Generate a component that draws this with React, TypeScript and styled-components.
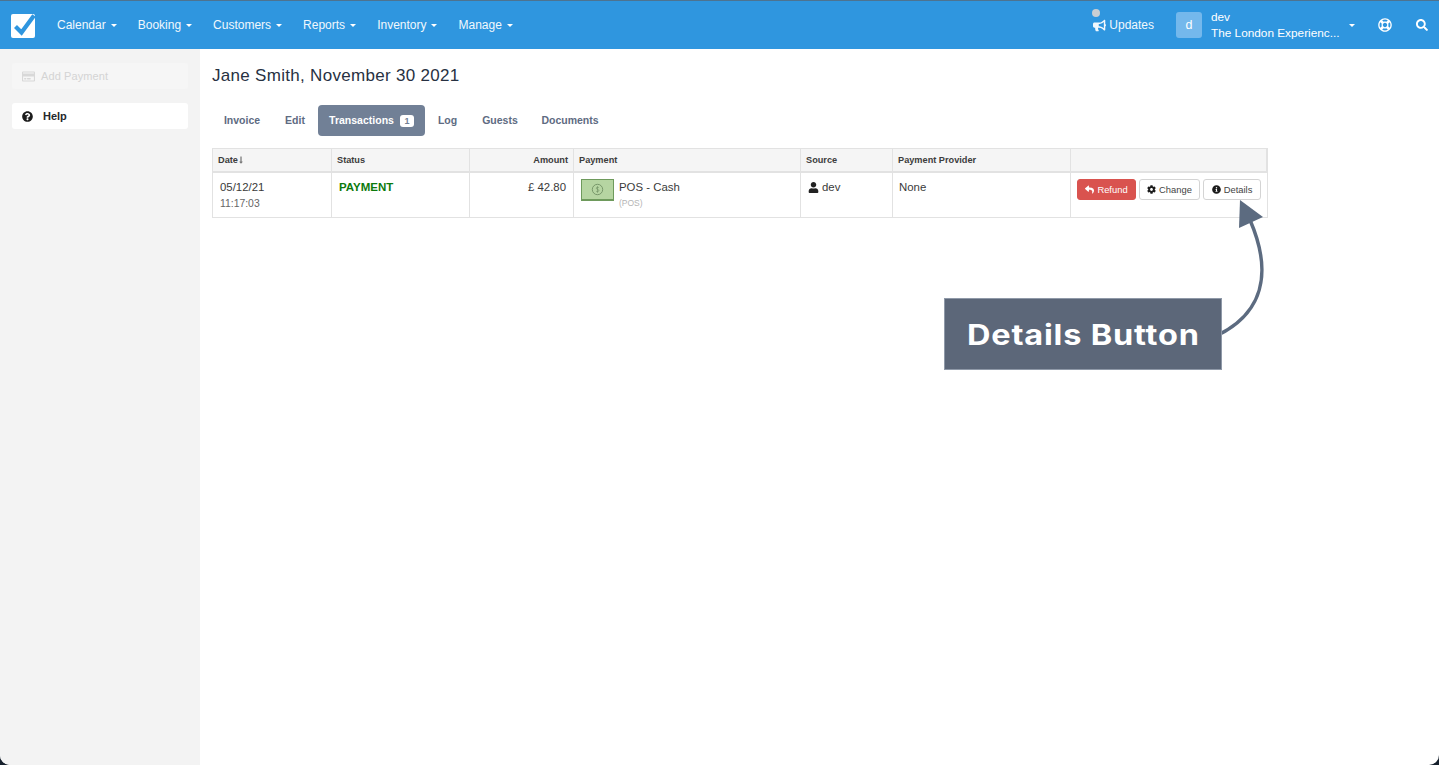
import React from 'react';
import styled, { createGlobalStyle } from 'styled-components';
import { FaBullhorn, FaRegLifeRing, FaSearch, FaRegCreditCard, FaQuestionCircle, FaUser, FaReply, FaCog, FaInfoCircle, FaLongArrowAltDown } from 'react-icons/fa';

const Global = createGlobalStyle`
  html, body { margin: 0; padding: 0; height: 100%; background: #16202c; }
  #root { height: 100%; }
  * { box-sizing: border-box; }
  body { font-family: "Liberation Sans", Arial, sans-serif; font-size: 11.5px; color: #333; overflow: hidden; }
`;

const Page = styled.div`
  position: relative;
  width: 1439px;
  height: 765px;
  display: flex;
  flex-direction: column;
  background: #fff;
  border-radius: 0 0 10px 10px;
  overflow: hidden;
`;

const Navbar = styled.header`
  height: 49px;
  flex: none;
  display: flex;
  align-items: center;
  background: #2f96df;
  border-top: 1px solid #4d7390;
  color: #fff;
  padding: 0 0 0 11px;
`;

const Logo = styled.div`
  width: 24px;
  height: 24px;
  border-radius: 2px;
  background: #fff;
  margin: 1px 22px 0 0;
  flex: none;
`;

const Menu = styled.nav`
  display: flex;
  gap: 21px;
`;

const MenuItem = styled.div`
  display: flex;
  align-items: center;
  font-size: 12px;
  color: #f1f8fd;
  gap: 5px;
`;

const Caret = styled.span`
  width: 0;
  height: 0;
  border-left: 3px solid transparent;
  border-right: 3px solid transparent;
  border-top: 3px solid #fff;
  margin-top: 1px;
`;

const NavRight = styled.div`
  margin-left: auto;
  display: flex;
  align-items: center;
  height: 100%;
`;

const Updates = styled.div`
  position: relative;
  display: flex;
  align-items: center;
  gap: 3px;
  font-size: 12px;
  margin-right: 22px;
  color: #f1f8fd;
`;

const Dot = styled.span`
  position: absolute;
  left: -1px;
  top: -9px;
  width: 8px;
  height: 8px;
  border-radius: 50%;
  background: #c9ced3;
`;

const Avatar = styled.div`
  width: 26px;
  height: 26px;
  border-radius: 3px;
  background: #74b8ec;
  display: flex;
  align-items: center;
  justify-content: center;
  font-size: 12.5px;
  margin-right: 9px;
`;

const UserBlock = styled.div`
  width: 138px;
  display: flex;
  flex-direction: column;
  gap: 3px;
  font-size: 11.8px;
  line-height: 13px;
  white-space: nowrap;
`;

const IconSlot = styled.span<{ $mr: number }>`
  display: flex;
  margin-right: ${p => p.$mr}px;
  font-size: 13px;
`;

const Body = styled.div`
  flex: 1;
  display: flex;
`;

const Sidebar = styled.aside`
  width: 200px;
  background: #f3f3f3;
  padding: 14px 12px;
  display: flex;
  flex-direction: column;
  gap: 14px;
`;

const SideButton = styled.div<{ $disabled?: boolean }>`
  height: 26px;
  border-radius: 3px;
  display: flex;
  align-items: center;
  padding-left: 10px;
  font-size: 11px;
  font-weight: ${p => (p.$disabled ? 400 : 700)};
  letter-spacing: ${p => (p.$disabled ? '0.1px' : '0')};
  color: ${p => (p.$disabled ? '#d4d4d4' : '#26282b')};
  background: ${p => (p.$disabled ? '#f6f6f6' : '#fff')};
  gap: ${p => (p.$disabled ? 6 : 10)}px;
  svg { font-size: ${p => (p.$disabled ? 13 : 11)}px; color: ${p => (p.$disabled ? '#d8d8d8' : '#1c1c1c')}; }
`;

const Main = styled.main`
  flex: 1;
  padding: 17px 0 0 12px;
`;

const Title = styled.h1`
  margin: 0;
  font-size: 17px;
  line-height: 20px;
  font-weight: 400;
  color: #273142;
  letter-spacing: 0.3px;
`;

const Tabs = styled.div`
  display: flex;
  margin-top: 19px;
  height: 31px;
`;

const Tab = styled.div<{ $active?: boolean; $w: number }>`
  width: ${p => p.$w}px;
  display: flex;
  align-items: center;
  justify-content: center;
  gap: 6px;
  font-size: 10.5px;
  font-weight: 700;
  border-radius: 4px;
  padding-bottom: 1px;
  color: ${p => (p.$active ? '#fff' : '#5e6b82')};
  background: ${p => (p.$active ? '#718096' : 'transparent')};
`;

const Badge = styled.span`
  background: #fff;
  color: #718096;
  border-radius: 3px;
  width: 14px;
  height: 12px;
  font-size: 9px;
  line-height: 12px;
  text-align: center;
  margin-top: 1px;
`;

const Table = styled.div`
  margin-top: 12px;
  width: 1056px;
  border: 1px solid #e2e2e2;
  display: grid;
  grid-template-columns: 119px 138px 104px 227px 92px 178px minmax(0, 1fr);
`;

const Th = styled.div<{ $right?: boolean }>`
  height: 24px;
  background: #f5f5f5;
  border-bottom: 2px solid #e2e2e2;
  border-right: 1px solid #e2e2e2;
  display: flex;
  align-items: center;
  justify-content: ${p => (p.$right ? 'flex-end' : 'flex-start')};
  padding: 0 5px;
  font-size: 9.2px;
  font-weight: 700;
  color: #3c3c3c;
  svg { font-size: 8px; color: #777; margin-left: -1px; }
  &:last-of-type { border-right: 0; }
`;

const Td = styled.div<{ $right?: boolean; $last?: boolean }>`
  height: 44px;
  border-right: ${p => (p.$last ? 0 : 1)}px solid #e2e2e2;
  padding: 8px 7px 0 ${p => (p.$right ? 0 : 6)}px;
  font-size: 11.4px;
  line-height: 13px;
  color: #3a3a3a;
  text-align: ${p => (p.$right ? 'right' : 'left')};
`;

const DateMain = styled.div`
  margin-left: 1px;
`;

const Time = styled.div`
  margin: 3px 0 0 1px;
  font-size: 10.4px;
  color: #666;
`;

const Status = styled.div`
  margin-left: 1px;
  color: #0c7a0c;
  font-size: 11.5px;
  font-weight: 700;
`;

const PayWrap = styled.div`
  display: flex;
  gap: 5px;
  margin: -2px 0 0 1px;
`;

const Note = styled.div`
  display: flex;
  flex: none;
  align-items: center;
  justify-content: center;
  width: 33px;
  height: 22px;
  background: #b6d5a2;
  border: 1px solid #6e9a5c;
  border-bottom-width: 2px;
`;

const PayText = styled.div`
  padding-top: 2px;
`;

const Sub = styled.div`
  margin-top: 3px;
  font-size: 8.5px;
  color: #b5b5b5;
`;

const SourceLine = styled.div`
  display: flex;
  align-items: center;
  gap: 3px;
  margin-left: 1px;
  svg { font-size: 11px; color: #222; }
`;

const Actions = styled.div`
  display: flex;
  gap: 3px;
  margin-top: -2px;
`;

const Btn = styled.div<{ $danger?: boolean; $w: number }>`
  width: ${p => p.$w}px;
  height: 21px;
  flex: none;
  border-radius: 3px;
  display: flex;
  align-items: center;
  justify-content: center;
  gap: 3px;
  font-size: 9.4px;
  background: ${p => (p.$danger ? '#d9534f' : '#fff')};
  color: ${p => (p.$danger ? '#fff' : '#444')};
  border: 1px solid ${p => (p.$danger ? '#d9534f' : '#d4d4d4')};
  svg { font-size: 9px; color: ${p => (p.$danger ? '#fff' : '#1c1c1c')}; }
`;

const Callout = styled.div`
  position: absolute;
  left: 944px;
  top: 298px;
  width: 278px;
  height: 72px;
  background: #5c6779;
  border: 1px solid #8f99a8;
  color: #fff;
  display: flex;
  align-items: center;
  justify-content: center;
  padding-top: 1px;
  font-family: Inter, "Open Sans", sans-serif;
  font-size: 28px;
  font-weight: 700;
`;

const CalloutText = styled.span`
  display: inline-block;
  white-space: nowrap;
  letter-spacing: 0.7px;
  transform: scaleX(1.16);
`;

const ArrowSvg = styled.svg`
  position: absolute;
  left: 1210px;
  top: 195px;
  width: 65px;
  height: 150px;
  overflow: visible;
`;

export default function App() {
  const menu = ['Calendar', 'Booking', 'Customers', 'Reports', 'Inventory', 'Manage'];
  return (
    <>
      <Global />
      <Page>
        <Navbar>
          <Logo>
            <svg width="24" height="24" viewBox="0 0 24 24">
              <path d="M4.5 12.5 L10.5 18.5 L23 1.5" fill="none" stroke="#2f96df" strokeWidth="4.2" />
            </svg>
          </Logo>
          <Menu>
            {menu.map(m => (
              <MenuItem key={m}>
                {m}
                <Caret />
              </MenuItem>
            ))}
          </Menu>
          <NavRight>
            <Updates>
              <Dot />
              <FaBullhorn size={13} />
              Updates
            </Updates>
            <Avatar>d</Avatar>
            <UserBlock>
              <span>dev</span>
              <span>The London Experienc...</span>
            </UserBlock>
            <IconSlot $mr={23}><Caret /></IconSlot>
            <IconSlot $mr={24}><FaRegLifeRing size={14} /></IconSlot>
            <IconSlot $mr={11}><FaSearch size={12} /></IconSlot>
          </NavRight>
        </Navbar>
        <Body>
          <Sidebar>
            <SideButton $disabled><FaRegCreditCard />Add Payment</SideButton>
            <SideButton><FaQuestionCircle />Help</SideButton>
          </Sidebar>
          <Main>
            <Title>Jane Smith, November 30 2021</Title>
            <Tabs>
              <Tab $w={60}>Invoice</Tab>
              <Tab $w={46}>Edit</Tab>
              <Tab $w={107} $active>Transactions<Badge>1</Badge></Tab>
              <Tab $w={45}>Log</Tab>
              <Tab $w={60}>Guests</Tab>
              <Tab $w={80}>Documents</Tab>
            </Tabs>
            <Table>
              <Th>Date<FaLongArrowAltDown /></Th>
              <Th>Status</Th>
              <Th $right>Amount</Th>
              <Th>Payment</Th>
              <Th>Source</Th>
              <Th>Payment Provider</Th>
              <Th />
              <Td>
                <DateMain>05/12/21</DateMain>
                <Time>11:17:03</Time>
              </Td>
              <Td><Status>PAYMENT</Status></Td>
              <Td $right>£ 42.80</Td>
              <Td>
                <PayWrap>
                  <Note>
                    <svg width="13" height="13" viewBox="0 0 12 12">
                      <circle cx="6" cy="6" r="4.8" fill="none" stroke="#6f8f63" strokeWidth="0.8" />
                      <path d="M7.3 4.4C7 3.9 5 3.6 4.8 4.7C4.7 6 7.4 5.6 7.3 7.2C7 8.3 5 8 4.7 7.5M6 3v6" fill="none" stroke="#6f8f63" strokeWidth="0.6" />
                    </svg>
                  </Note>
                  <PayText>
                    POS - Cash
                    <Sub>(POS)</Sub>
                  </PayText>
                </PayWrap>
              </Td>
              <Td>
                <SourceLine><FaUser />dev</SourceLine>
              </Td>
              <Td>None</Td>
              <Td $last>
                <Actions>
                  <Btn $danger $w={59}><FaReply />Refund</Btn>
                  <Btn $w={61}><FaCog />Change</Btn>
                  <Btn $w={58}><FaInfoCircle />Details</Btn>
                </Actions>
              </Td>
            </Table>
          </Main>
        </Body>
        <ArrowSvg viewBox="1210 195 65 150">
          <path d="M1218 335 C1252 318 1278 285 1250 220" fill="none" stroke="#5c6b80" strokeWidth="3.5" />
          <polygon points="1240,200 1263,217 1239,228" fill="#5c6b80" />
        </ArrowSvg>
        <Callout><CalloutText>Details Button</CalloutText></Callout>
      </Page>
    </>
  );
}
